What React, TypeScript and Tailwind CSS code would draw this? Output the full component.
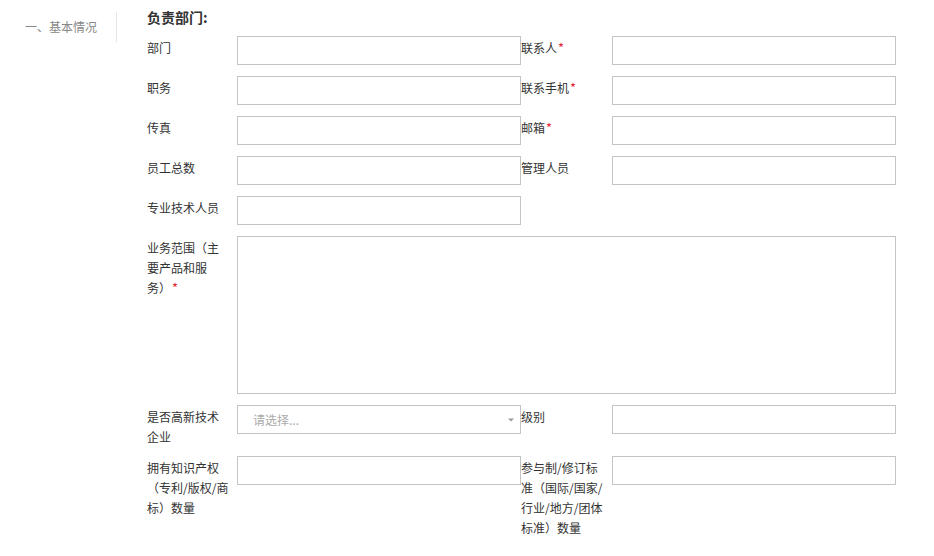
import React from 'react';

const Req = () => <span className="text-[13px] leading-none text-[#e4283c] ml-[1px]">*</span>;

function Label({ children, right }: { children: React.ReactNode; right?: boolean }) {
  return (
    <div
      className={
        'shrink-0 pt-[2px] -mb-[2px] pr-[7px] text-[12px] leading-5 text-[#333] ' +
        (right ? 'w-[91px]' : 'w-[90px]')
      }
    >
      {children}
    </div>
  );
}

function Field() {
  return <input className="w-[284px] h-[29px] shrink-0 border border-[#c4c4c4] bg-white outline-none px-2 text-[12px]" />;
}

export default function App() {
  return (
    <div className="flex min-h-[556px] bg-white font-['Noto_Sans_CJK_SC','Microsoft_YaHei',sans-serif] [text-spacing-trim:space-all]">
      <aside className="w-[117px] shrink-0 pt-[12px]">
        <div className="flex h-[30px]">
          <div className="flex-1 flex items-center pl-[25px] text-[12px] text-[#888]">一、基本情况</div>
          <div className="w-px bg-[#e6e6e6]" />
        </div>
      </aside>

      <main className="pl-[30px]">
        <h3 className="pt-[7px] mb-[9px] text-[14px] leading-5 font-bold text-[#333]">负责部门:</h3>

        <div className="flex flex-col gap-[11px]">
          <div className="flex items-start">
            <Label>部门</Label>
            <Field />
            <Label right>联系人<Req /></Label>
            <Field />
          </div>
          <div className="flex items-start">
            <Label>职务</Label>
            <Field />
            <Label right>联系手机<Req /></Label>
            <Field />
          </div>
          <div className="flex items-start">
            <Label>传真</Label>
            <Field />
            <Label right>邮箱<Req /></Label>
            <Field />
          </div>
          <div className="flex items-start">
            <Label>员工总数</Label>
            <Field />
            <Label right>管理人员</Label>
            <Field />
          </div>
          <div className="flex items-start">
            <Label>专业技术人员</Label>
            <Field />
          </div>
          <div className="flex items-start">
            <Label>业务范围（主要产品和服务）<Req /></Label>
            <textarea className="w-[659px] h-[158px] shrink-0 border border-[#c4c4c4] bg-white outline-none resize-none p-2 text-[12px]" />
          </div>
          <div className="flex items-start">
            <Label>是否高新技术企业</Label>
            <div className="w-[284px] h-[29px] shrink-0 border border-[#c4c4c4] flex items-center justify-between pl-[15px] pr-[6px]">
              <span className="text-[12px] text-[#aaa]">请选择...</span>
              <svg width="6" height="4" viewBox="0 0 6 4">
                <path d="M0 0.5h6L3 3.5z" fill="#999" />
              </svg>
            </div>
            <Label right>级别</Label>
            <Field />
          </div>
          <div className="flex items-start">
            <Label>拥有知识产权（专利/版权/商标）数量</Label>
            <Field />
            <Label right>参与制/修订标准（国际/国家/行业/地方/团体标准）数量</Label>
            <Field />
          </div>
        </div>
      </main>
    </div>
  );
}
